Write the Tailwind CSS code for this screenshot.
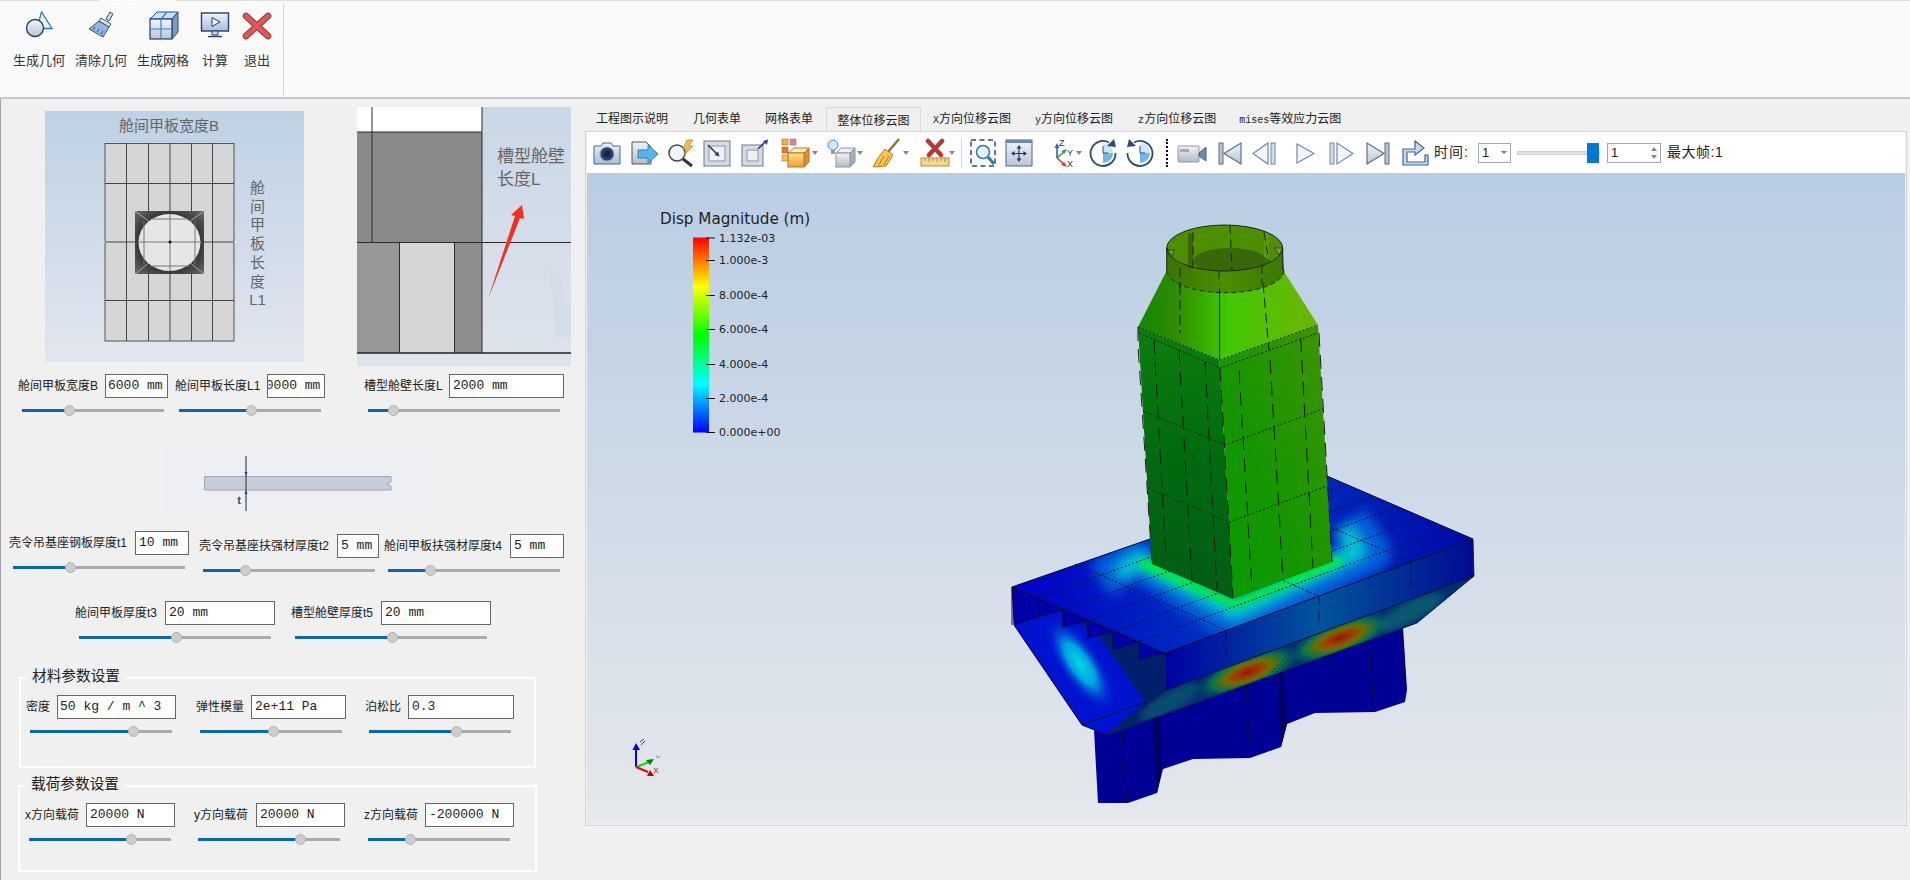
<!DOCTYPE html>
<html><head><meta charset="utf-8"><script src="https://cdn.jsdelivr.net/npm/@tailwindcss/browser@4"></script></head>
<body class="w-[1910px] h-[880px] overflow-hidden bg-[#f0f0f0] text-[12px] text-[#222] font-['Liberation_Sans','Noto_Sans_CJK_SC',sans-serif]">
<svg class="absolute w-0 h-0">
<defs>
<linearGradient id="gb" x1="0" y1="0" x2="0" y2="1"><stop offset="0" stop-color="#eef2f8"/><stop offset="1" stop-color="#a9bfd8"/></linearGradient>
<linearGradient id="gg" x1="0" y1="0" x2="0" y2="1"><stop offset="0" stop-color="#f2f3f5"/><stop offset="1" stop-color="#b4bac4"/></linearGradient>
<linearGradient id="gn" x1="0" y1="0" x2="0" y2="1"><stop offset="0" stop-color="#f4f6fa"/><stop offset="1" stop-color="#b9c4d6"/></linearGradient>
<linearGradient id="go" x1="0" y1="0" x2="0" y2="1"><stop offset="0" stop-color="#ffe08a"/><stop offset="1" stop-color="#f0a030"/></linearGradient>
<linearGradient id="scale" x1="0" y1="1" x2="0" y2="0"><stop offset="0" stop-color="#0000ff"/><stop offset=".25" stop-color="#00ffff"/><stop offset=".5" stop-color="#00ff00"/><stop offset=".75" stop-color="#ffff00"/><stop offset="1" stop-color="#ff0000"/></linearGradient>
<linearGradient id="tl" x1="0" y1="0" x2="0" y2="1"><stop offset="0" stop-color="#0c7e0c"/><stop offset=".5" stop-color="#006a10"/><stop offset="1" stop-color="#045c14"/></linearGradient>
<linearGradient id="tr" x1="1" y1="0" x2="0" y2="1"><stop offset="0" stop-color="#3f9400"/><stop offset=".6" stop-color="#149600"/><stop offset="1" stop-color="#089c00"/></linearGradient>
<linearGradient id="tt" x1="0" y1="0" x2="1" y2="0"><stop offset="0" stop-color="#108a00"/><stop offset=".2" stop-color="#2f8a00"/><stop offset=".5" stop-color="#42c800"/><stop offset="1" stop-color="#6cb400"/></linearGradient>
<linearGradient id="rim" x1="0" y1="0" x2="1" y2="0"><stop offset="0" stop-color="#3c7400"/><stop offset=".5" stop-color="#4b8e00"/><stop offset="1" stop-color="#3c7800"/></linearGradient>
<linearGradient id="ff" x1="0" y1="0" x2="1" y2="0"><stop offset="0" stop-color="#0000a4"/><stop offset=".5" stop-color="#00559c"/><stop offset="1" stop-color="#000a92"/></linearGradient>
<linearGradient id="deck" x1="0" y1="0" x2="1" y2="0"><stop offset="0" stop-color="#0000c4"/><stop offset=".5" stop-color="#0038c0"/><stop offset="1" stop-color="#0008aa"/></linearGradient>
<radialGradient id="hot"><stop offset="0" stop-color="#8a1c00"/><stop offset=".25" stop-color="#a03c00"/><stop offset=".45" stop-color="#6e7000"/><stop offset=".7" stop-color="#0a7050"/><stop offset="1" stop-color="#005070" stop-opacity="0"/></radialGradient>
<radialGradient id="cy"><stop offset="0" stop-color="#00dcdc"/><stop offset=".45" stop-color="#00a0e0"/><stop offset="1" stop-color="#0020d0" stop-opacity="0"/></radialGradient>
<filter id="blur" x="-20%" y="-20%" width="140%" height="140%"><feGaussianBlur stdDeviation="6"/></filter>
<filter id="blur2" x="-20%" y="-20%" width="140%" height="140%"><feGaussianBlur stdDeviation="3"/></filter>
<clipPath id="deckclip"><polygon points="1012,587 1150,539 1327,476 1473,539 1165,653"/></clipPath>
<clipPath id="plateclip"><polygon points="1107,735 1166,690 1474,576 1417,623"/></clipPath>
<clipPath id="panelclip"><polygon points="1014,625 1062,610 1100,637 1145,702 1107,735 1082,725"/></clipPath>
<clipPath id="topclip"><ellipse cx="1224.7" cy="248" rx="58" ry="23"/></clipPath>
</defs>
</svg>

<!-- ribbon -->
<header class="h-[99px] flex flex-col">
  <div class="flex h-[1px]"><div class="w-[100px] bg-[#e0e0e0]"></div><div class="w-[76px] bg-white"></div><div class="flex-1 bg-[#e0e0e0]"></div></div>
  <div class="flex-1 bg-[#fafafa] flex pl-[8px] text-[13px] text-[#333]">
    <div class="w-[62px] flex flex-col items-center pt-[9px]">
      <svg class="w-[30px] h-[30px]" viewBox="0 0 30 30"><path d="M17.500 2 L28 18.500 H13 Z" fill="#eef4fa" stroke="#1c7cc0" stroke-width="1.300"/><circle cx="11" cy="18" r="8.500" fill="url(#gn)" stroke="#2a3f66" stroke-width="1.400"/></svg>
      <span class="mt-[11px] leading-[20px]">生成几何</span>
    </div>
    <div class="w-[62px] flex flex-col items-center pt-[9px]">
      <svg class="w-[30px] h-[30px]" viewBox="0 0 30 30"><path d="M20 9 L24 2 L27 4 L23 11 Z" fill="#cfd9e8" stroke="#34507c"/><path d="M15 8 L25 14 L23 17 L13 11 Z" fill="#dfe6f0" stroke="#34507c"/><path d="M13 11 L23 17 L17 27 L3 19 Z" fill="#8fb6e0" stroke="#34507c"/><path d="M7 20 l2 -3 M11 22 l2 -3 M15 24 l2 -3" stroke="#34507c"/></svg>
      <span class="mt-[11px] leading-[20px]">清除几何</span>
    </div>
    <div class="w-[62px] flex flex-col items-center pt-[9px]">
      <svg class="w-[32px] h-[30px]" viewBox="0 0 32 30"><path d="M3 9 L10 2 H31 L25 9 Z" fill="#cfe0f0" stroke="#1c4f86"/><path d="M25 9 L31 2 V22 L25 29 Z" fill="#7d9cc0" stroke="#1c4f86"/><rect x="3" y="9" width="22" height="20" fill="url(#gn)" stroke="#1c3f70" stroke-width="1.200"/><path d="M14 9 V29 M3 19 H25 M14 9 L20 2" stroke="#2e86c8" stroke-width="1.200" fill="none"/></svg>
      <span class="mt-[11px] leading-[20px]">生成网格</span>
    </div>
    <div class="w-[42px] flex flex-col items-center pt-[9px]">
      <svg class="w-[30px] h-[30px]" viewBox="0 0 30 30"><rect x="1.500" y="3" width="27" height="18" fill="url(#gb)" stroke="#24406c" stroke-width="1.400"/><path d="M12 7.500 L20 12 L12 16.500 Z" fill="#eef4fb" stroke="#24406c"/><path d="M12 21 H18 V25 H12 Z" fill="#c8d2e0" stroke="#24406c"/><path d="M8 26.500 H22" stroke="#24406c" stroke-width="1.400"/></svg>
      <span class="mt-[11px] leading-[20px]">计算</span>
    </div>
    <div class="w-[42px] flex flex-col items-center pt-[9px]">
      <svg class="w-[30px] h-[30px]" viewBox="0 0 30 30"><path d="M4 6 L15 16 M26 6 L15 16 M4 26 L15 16 M26 26 L15 16" stroke="#a03030" stroke-width="6.500" stroke-linecap="round"/><path d="M4 6 L26 26 M26 6 L4 26" stroke="#dc5a5a" stroke-width="4.500" stroke-linecap="round"/></svg>
      <span class="mt-[11px] leading-[20px]">退出</span>
    </div>
    <div class="ml-[5px] w-[1px] my-[2px] bg-[#d4d4d4]"></div>
  </div>
  <div class="h-[2px] bg-[#c8c8c8]"></div>
</header>

<main class="flex h-[781px]">
<!-- left panel -->
<section class="w-[585px] shadow-[inset_1px_0_0_#a0a0a0] pt-[8px]">
  <div class="flex items-start pl-[45px]">
    <svg class="mt-[4px] w-[259px] h-[251px]" viewBox="45 111 259 251">
      <defs><linearGradient id="i1" x1="0" y1="0" x2="0" y2="1"><stop offset="0" stop-color="#bed1e5"/><stop offset="1" stop-color="#e2e6ee"/></linearGradient><radialGradient id="box" cx=".5" cy=".5" r=".7"><stop offset=".5" stop-color="#222"/><stop offset="1" stop-color="#6a6a6a"/></radialGradient></defs>
      <rect x="45" y="111" width="259" height="251" fill="url(#i1)"/>
      <rect x="105" y="143.500" width="129" height="197.500" fill="#d6d6d6" stroke="#555" stroke-width="1"/>
      <path d="M126.500 143.500V341 M148.500 143.500V341 M170 143.500V341 M191.500 143.500V341 M212.500 143.500V341 M105 183.500H234 M105 242H234 M105 300.500H234" stroke="#444" stroke-width="1" fill="none"/>
      <path d="M103 242H105 M234 242H236" stroke="#fff"/>
      <rect x="135" y="211" width="69" height="63" fill="url(#box)"/>
      <path d="M135 211 L150 222 M204 211 L189 222 M135 274 L150 262 M204 274 L189 262" stroke="#aaa"/>
      <ellipse cx="169.500" cy="242.500" rx="31" ry="28.500" fill="#e6e6e6"/>
      <path d="M144 220V265 M195 220V265 M150 219H189 M150 266H189 M170 214V271 M139 242H200" stroke="#777" fill="none"/>
      <circle cx="170" cy="242" r="1.500" fill="#111"/>
      <text x="169" y="131" text-anchor="middle" font-size="15" fill="#666">舱间甲板宽度B</text>
      <text font-size="15" fill="#666" text-anchor="middle"><tspan x="257.500" y="193">舱</tspan><tspan x="257.500" y="212">间</tspan><tspan x="257.500" y="230">甲</tspan><tspan x="257.500" y="249">板</tspan><tspan x="257.500" y="268">长</tspan><tspan x="257.500" y="287">度</tspan><tspan x="257.500" y="305">L1</tspan></text>
    </svg>
    <svg class="ml-[53px] w-[214px] h-[259px]" viewBox="357 107 214 259">
      <defs><linearGradient id="i2" x1="0" y1="0" x2="0" y2="1"><stop offset="0" stop-color="#cad7e6"/><stop offset="1" stop-color="#dee4ec"/></linearGradient></defs>
      <rect x="357" y="107" width="214" height="259" fill="url(#i2)"/>
      <path d="M547 262L560 270L563 300L571 305V337H556L553 300Z" fill="#d5dde8"/>
      <rect x="357" y="107" width="125" height="25" fill="#fff"/>
      <rect x="357" y="132" width="125" height="110" fill="#8a8a8a"/>
      <rect x="357" y="242" width="42" height="111" fill="#989898"/>
      <rect x="399" y="242" width="55" height="111" fill="#d6d6d6"/>
      <rect x="454" y="242" width="28" height="111" fill="#8e8e8e"/>
      <path d="M372 107V242 M482 107V353 M357 132H482 M357 242.500H571 M399.500 243V353 M454.500 243V353" stroke="#2a2a2a" stroke-width="1" fill="none"/>
      <path d="M357 353H571" stroke="#222" stroke-width="1.500"/>
      <text x="497" y="162" font-size="17" fill="#666">槽型舱壁</text>
      <text x="497" y="185" font-size="17" fill="#666">长度L</text>
      <path d="M488 299 L515 216 L511 215 L522 205 L524 219 L520 218 Z" fill="#f03020"/>
    </svg>
  </div>

  <!-- row B L1 L -->
  <div class="flex items-start pl-[18px] mt-[8px]">
    <div>
      <div class="flex items-center h-[24px]"><span class="w-[87px]">舱间甲板宽度B</span><div class="w-[63px] h-[24px] bg-white border border-[#666] pl-[2px] leading-[22px] font-['Liberation_Mono'] text-[13px] whitespace-pre">6000 mm</div></div>
      <div class="relative ml-[4px] mt-[11px] h-[3px] w-[142px] bg-[#aaa]"><div class="h-full w-[47px] bg-[#0a66b8]"></div><div class="absolute left-[42px] -top-[4px] size-[11px] rounded-full bg-[#cdcdcd] border border-[#b4b4b4]"></div></div>
    </div>
    <div class="ml-[7px]">
      <div class="flex items-center h-[24px]"><span class="w-[92px]">舱间甲板长度L1</span><div class="w-[58px] h-[24px] bg-white border border-[#666] overflow-hidden leading-[22px] font-['Liberation_Mono'] text-[13px] whitespace-pre"><span class="inline-block -ml-[10px]">10000 mm</span></div></div>
      <div class="relative ml-[4px] mt-[11px] h-[3px] w-[142px] bg-[#aaa]"><div class="h-full w-[72px] bg-[#0a66b8]"></div><div class="absolute left-[67px] -top-[4px] size-[11px] rounded-full bg-[#cdcdcd] border border-[#b4b4b4]"></div></div>
    </div>
    <div class="ml-[39px]">
      <div class="flex items-center h-[24px]"><span class="w-[85px]">槽型舱壁长度L</span><div class="w-[115px] h-[24px] bg-white border border-[#666] pl-[3px] leading-[22px] font-['Liberation_Mono'] text-[13px] whitespace-pre">2000 mm</div></div>
      <div class="relative ml-[4px] mt-[11px] h-[3px] w-[192px] bg-[#aaa]"><div class="h-full w-[25px] bg-[#0a66b8]"></div><div class="absolute left-[20px] -top-[4px] size-[11px] rounded-full bg-[#cdcdcd] border border-[#b4b4b4]"></div></div>
    </div>
  </div>

  <!-- thickness picture -->
  <svg class="ml-[162px] mt-[31px] w-[278px] h-[76px]" viewBox="162 443 278 76">
    <rect x="162" y="443" width="278" height="76" fill="#eeeff2"/>
    <path d="M204.500 476.500H391V482L387 483.500L391 486V490H204.500Z" fill="#c6cdd9" stroke="#9aa5b5"/>
    <path d="M246 456V511" stroke="#3d4a66" stroke-width="1.200"/>
    <path d="M244.500 472H247.500L246 476Z M244.500 494H247.500L246 490Z" fill="#2d3a56"/>
    <text x="239" y="504" text-anchor="middle" font-size="11" font-weight="700" fill="#3d4a66">t</text>
  </svg>

  <div class="flex items-start pl-[9px] mt-[12px]">
    <div>
      <div class="flex items-center h-[24px]"><span class="w-[126px]">壳令吊基座钢板厚度t1</span><div class="w-[54px] h-[24px] bg-white border border-[#666] pl-[3px] leading-[22px] font-['Liberation_Mono'] text-[13px] whitespace-pre">10 mm</div></div>
      <div class="relative ml-[4px] mt-[11px] h-[3px] w-[172px] bg-[#aaa]"><div class="h-full w-[57px] bg-[#0a66b8]"></div><div class="absolute left-[52px] -top-[4px] size-[11px] rounded-full bg-[#cdcdcd] border border-[#b4b4b4]"></div></div>
    </div>
    <div class="ml-[10px] mt-[3px]">
      <div class="flex items-center h-[24px]"><span class="w-[138px]">壳令吊基座扶强材厚度t2</span><div class="w-[42px] h-[24px] bg-white border border-[#666] pl-[3px] leading-[22px] font-['Liberation_Mono'] text-[13px] whitespace-pre">5 mm</div></div>
      <div class="relative ml-[4px] mt-[11px] h-[3px] w-[172px] bg-[#aaa]"><div class="h-full w-[42px] bg-[#0a66b8]"></div><div class="absolute left-[37px] -top-[4px] size-[11px] rounded-full bg-[#cdcdcd] border border-[#b4b4b4]"></div></div>
    </div>
    <div class="ml-[5px] mt-[3px]">
      <div class="flex items-center h-[24px]"><span class="w-[126px]">舱间甲板扶强材厚度t4</span><div class="w-[54px] h-[24px] bg-white border border-[#666] pl-[3px] leading-[22px] font-['Liberation_Mono'] text-[13px] whitespace-pre">5 mm</div></div>
      <div class="relative ml-[4px] mt-[11px] h-[3px] w-[172px] bg-[#aaa]"><div class="h-full w-[42px] bg-[#0a66b8]"></div><div class="absolute left-[37px] -top-[4px] size-[11px] rounded-full bg-[#cdcdcd] border border-[#b4b4b4]"></div></div>
    </div>
  </div>

  <div class="flex items-start pl-[75px] mt-[29px]">
    <div>
      <div class="flex items-center h-[24px]"><span class="w-[90px]">舱间甲板厚度t3</span><div class="w-[110px] h-[24px] bg-white border border-[#666] pl-[3px] leading-[22px] font-['Liberation_Mono'] text-[13px] whitespace-pre">20 mm</div></div>
      <div class="relative ml-[4px] mt-[11px] h-[3px] w-[192px] bg-[#aaa]"><div class="h-full w-[97px] bg-[#0a66b8]"></div><div class="absolute left-[92px] -top-[4px] size-[11px] rounded-full bg-[#cdcdcd] border border-[#b4b4b4]"></div></div>
    </div>
    <div class="ml-[16px]">
      <div class="flex items-center h-[24px]"><span class="w-[90px]">槽型舱壁厚度t5</span><div class="w-[110px] h-[24px] bg-white border border-[#666] pl-[3px] leading-[22px] font-['Liberation_Mono'] text-[13px] whitespace-pre">20 mm</div></div>
      <div class="relative ml-[4px] mt-[11px] h-[3px] w-[192px] bg-[#aaa]"><div class="h-full w-[97px] bg-[#0a66b8]"></div><div class="absolute left-[92px] -top-[4px] size-[11px] rounded-full bg-[#cdcdcd] border border-[#b4b4b4]"></div></div>
    </div>
  </div>

  <!-- material -->
  <div class="relative ml-[19px] mt-[38px] w-[517px] h-[91px] border-2 border-white pt-[16px] pl-[5px] flex items-start">
    <span class="absolute left-[5px] -top-[13px] px-[6px] bg-[#f0f0f0] text-[14.67px] leading-[20px]">材料参数设置</span>
    <div>
      <div class="flex items-center h-[24px]"><span class="w-[31px]">密度</span><div class="w-[119px] h-[24px] bg-white border border-[#666] pl-[2px] leading-[22px] font-['Liberation_Mono'] text-[13px] whitespace-pre">50 kg / m ^ 3</div></div>
      <div class="relative ml-[4px] mt-[11px] h-[3px] w-[142px] bg-[#aaa]"><div class="h-full w-[103px] bg-[#0a66b8]"></div><div class="absolute left-[98px] -top-[4px] size-[11px] rounded-full bg-[#cdcdcd] border border-[#b4b4b4]"></div></div>
    </div>
    <div class="ml-[20px]">
      <div class="flex items-center h-[24px]"><span class="w-[55px]">弹性模量</span><div class="w-[95px] h-[24px] bg-white border border-[#666] pl-[3px] leading-[22px] font-['Liberation_Mono'] text-[13px] whitespace-pre">2e+11 Pa</div></div>
      <div class="relative ml-[4px] mt-[11px] h-[3px] w-[142px] bg-[#aaa]"><div class="h-full w-[73px] bg-[#0a66b8]"></div><div class="absolute left-[68px] -top-[4px] size-[11px] rounded-full bg-[#cdcdcd] border border-[#b4b4b4]"></div></div>
    </div>
    <div class="ml-[19px]">
      <div class="flex items-center h-[24px]"><span class="w-[43px]">泊松比</span><div class="w-[106px] h-[24px] bg-white border border-[#666] pl-[3px] leading-[22px] font-['Liberation_Mono'] text-[13px] whitespace-pre">0.3</div></div>
      <div class="relative ml-[4px] mt-[11px] h-[3px] w-[142px] bg-[#aaa]"><div class="h-full w-[87px] bg-[#0a66b8]"></div><div class="absolute left-[82px] -top-[4px] size-[11px] rounded-full bg-[#cdcdcd] border border-[#b4b4b4]"></div></div>
    </div>
  </div>

  <!-- load -->
  <div class="relative ml-[18px] mt-[17px] w-[519px] h-[87px] border-2 border-white pt-[16px] pl-[5px] flex items-start">
    <span class="absolute left-[5px] -top-[13px] px-[6px] bg-[#f0f0f0] text-[14.67px] leading-[20px]">载荷参数设置</span>
    <div>
      <div class="flex items-center h-[24px]"><span class="w-[61px]">x方向载荷</span><div class="w-[89px] h-[24px] bg-white border border-[#666] pl-[3px] leading-[22px] font-['Liberation_Mono'] text-[13px] whitespace-pre">20000 N</div></div>
      <div class="relative ml-[4px] mt-[11px] h-[3px] w-[142px] bg-[#aaa]"><div class="h-full w-[102px] bg-[#0a66b8]"></div><div class="absolute left-[97px] -top-[4px] size-[11px] rounded-full bg-[#cdcdcd] border border-[#b4b4b4]"></div></div>
    </div>
    <div class="ml-[19px]">
      <div class="flex items-center h-[24px]"><span class="w-[62px]">y方向载荷</span><div class="w-[89px] h-[24px] bg-white border border-[#666] pl-[3px] leading-[22px] font-['Liberation_Mono'] text-[13px] whitespace-pre">20000 N</div></div>
      <div class="relative ml-[4px] mt-[11px] h-[3px] w-[142px] bg-[#aaa]"><div class="h-full w-[102px] bg-[#0a66b8]"></div><div class="absolute left-[97px] -top-[4px] size-[11px] rounded-full bg-[#cdcdcd] border border-[#b4b4b4]"></div></div>
    </div>
    <div class="ml-[19px]">
      <div class="flex items-center h-[24px]"><span class="w-[61px]">z方向载荷</span><div class="w-[89px] h-[24px] bg-white border border-[#666] pl-[3px] leading-[22px] font-['Liberation_Mono'] text-[13px] whitespace-pre">-200000 N</div></div>
      <div class="relative ml-[4px] mt-[11px] h-[3px] w-[142px] bg-[#aaa]"><div class="h-full w-[42px] bg-[#0a66b8]"></div><div class="absolute left-[37px] -top-[4px] size-[11px] rounded-full bg-[#cdcdcd] border border-[#b4b4b4]"></div></div>
    </div>
  </div>
</section>

<!-- right panel -->
<section class="w-[1322px] pt-[8px] flex flex-col items-stretch">
  <nav class="flex h-[24px] items-center pl-[11px]">
    <span>工程图示说明</span>
    <span class="ml-[25px]">几何表单</span>
    <span class="ml-[24px]">网格表单</span>
    <span class="ml-[13px] w-[95px] h-[24px] leading-[26px] text-center bg-[#f0f0f0] border border-b-0 border-[#d9d9d9]">整体位移云图</span>
    <span class="ml-[12px]"><span class="font-['Liberation_Mono'] text-[10px]">X</span>方向位移云图</span>
    <span class="ml-[24px]"><span class="font-['Liberation_Mono'] text-[10px]">y</span>方向位移云图</span>
    <span class="ml-[25px]"><span class="font-['Liberation_Mono'] text-[10px]">z</span>方向位移云图</span>
    <span class="ml-[23px]"><span class="font-['Liberation_Mono'] text-[10px]">mises</span>等效应力云图</span>
  </nav>
  <div class="h-[695px] border border-[#d4d4d4] px-[1px] pb-[2px]">
  <div class="h-[41px] bg-white flex items-center pl-[5px] text-[14px]">
    <svg class="w-[30px] h-[30px]" viewBox="0 0 30 30"><path d="M2 8H9L11 5H19L21 8H28V26H2Z" fill="url(#gb)" stroke="#47658c"/><circle cx="15" cy="16" r="7" fill="#2a3f6a" stroke="#8ea8c8"/><circle cx="15" cy="16" r="3.500" fill="#15264a"/></svg>
    <svg class="ml-[7px] w-[30px] h-[30px]" viewBox="0 0 30 30"><path d="M3 4H17L22 9V26H3Z" fill="url(#gg)" stroke="#555"/><path d="M9 12H19V7L29 16L19 25V20H9Z" fill="#59b4ec" stroke="#2a84c0"/></svg>
    <svg class="ml-[6px] w-[30px] h-[30px]" viewBox="0 0 30 30"><circle cx="12" cy="15" r="8" fill="#eef3f8" stroke="#444" stroke-width="1.500"/><path d="M18 21L27 28" stroke="#333" stroke-width="3"/><path d="M22 2L18 11H22L19 17L28 8H24L28 2Z" fill="#f5b85a" stroke="#c87a20" stroke-width=".7"/></svg>
    <svg class="ml-[7px] w-[30px] h-[30px]" viewBox="0 0 30 30"><rect x="2" y="3" width="26" height="25" fill="#d5dbe3" stroke="#6a7a8e"/><rect x="7" y="8" width="16" height="15" fill="#eef0f3" stroke="#8a96a6"/><path d="M6 7L16 17" stroke="#1e3f70" stroke-width="1.600"/><path d="M17.500 18.500L12.500 17L16 13.500Z" fill="#1e3f70"/></svg>
    <svg class="ml-[8px] w-[30px] h-[30px]" viewBox="0 0 30 30"><rect x="2" y="7" width="21" height="21" fill="#d5dbe3" stroke="#6a7a8e"/><rect x="7" y="12" width="11" height="11" fill="#eef0f3" stroke="#8a96a6"/><path d="M18 11L26 3" stroke="#2a4a78" stroke-width="1.600"/><path d="M28 1.500L27 7L23 3Z" fill="#2a4a78"/></svg>
    <svg class="ml-[10px] w-[30px] h-[30px]" viewBox="0 0 30 30"><rect x="2" y="1" width="6" height="6" fill="#f4b040" stroke="#a07020" stroke-width=".6"/><rect x="10" y="1" width="6" height="6" fill="#e88080" stroke="#7080a0" stroke-width=".6"/><rect x="2" y="9" width="6" height="6" fill="#e87040" stroke="#a07020" stroke-width=".6"/><rect x="2" y="17" width="6" height="6" fill="#f4c060" stroke="#a07020" stroke-width=".6"/><path d="M8 15L14 10H29L24 15Z" fill="#fdeeba" stroke="#b07820"/><path d="M24 15L29 10V24L24 29Z" fill="#e09030" stroke="#b07820"/><rect x="8" y="15" width="16" height="14" fill="url(#go)" stroke="#b07820"/></svg>
    <svg class="ml-[2px] w-[6px] h-[4px]" viewBox="0 0 6 4"><path d="M0 0H6L3 4Z" fill="#888"/></svg>
    <svg class="ml-[8px] w-[30px] h-[30px]" viewBox="0 0 30 30"><circle cx="7" cy="7" r="5" fill="#cfe8fb" stroke="#5a90c0"/><rect x="5" y="12" width="4" height="4" fill="#999"/><path d="M10 15L15 10H29L24 15Z" fill="#eef0f3" stroke="#8a96a6"/><path d="M24 15L29 10V24L24 29Z" fill="#a6afbc" stroke="#8a96a6"/><rect x="10" y="15" width="14" height="14" fill="url(#gg)" stroke="#8a96a6"/></svg>
    <svg class="ml-[1px] w-[6px] h-[4px]" viewBox="0 0 6 4"><path d="M0 0H6L3 4Z" fill="#888"/></svg>
    <svg class="ml-[9px] w-[30px] h-[30px]" viewBox="0 0 30 30"><path d="M27 1L16 14" stroke="#a06a30" stroke-width="2.400"/><path d="M13 11L21 17L14 28L1 29L6 20Z" fill="#f6c452" stroke="#b87a20"/><path d="M7 27L12 18 M12 27L17 18" stroke="#b87a20"/></svg>
    <svg class="ml-[1px] w-[6px] h-[4px]" viewBox="0 0 6 4"><path d="M0 0H6L3 4Z" fill="#888"/></svg>
    <svg class="ml-[11px] w-[30px] h-[30px]" viewBox="0 0 30 30"><path d="M8 3L21 17 M22 3L9 17" stroke="#b83838" stroke-width="4.500" stroke-linecap="round"/><rect x="1" y="20" width="28" height="8" fill="#f5d890" stroke="#b88a30"/><path d="M5 20v3 M9 20v4 M13 20v3 M17 20v4 M21 20v3 M25 20v4" stroke="#b88a30"/></svg>
    <svg class="-ml-[1px] w-[6px] h-[4px]" viewBox="0 0 6 4"><path d="M0 0H6L3 4Z" fill="#888"/></svg>
    <div class="ml-[6px] w-[1px] h-[30px] bg-[#d8d8d8]"></div>
    <svg class="ml-[6px] w-[30px] h-[30px]" viewBox="0 0 30 30"><rect x="3" y="2" width="24" height="26" fill="none" stroke="#2a4a78" stroke-width="1.500" stroke-dasharray="5 3.500"/><circle cx="15" cy="14" r="6.500" fill="#e6f2fb" stroke="#2a78b8" stroke-width="1.500"/><path d="M20 19L26 26" stroke="#2a78b8" stroke-width="3"/></svg>
    <svg class="ml-[6px] w-[30px] h-[30px]" viewBox="0 0 30 30"><rect x="2" y="2" width="26" height="26" fill="url(#gn)" stroke="#47658c"/><rect x="2" y="2" width="26" height="3" fill="#6e88ac"/><path d="M15 9V22 M9 15.500H21" stroke="#1e3f70" stroke-width="1.200"/><path d="M15 7L12.500 10.500H17.500Z M15 24L12.500 20.500H17.500Z M7 15.500L10.500 13V18Z M23 15.500L19.500 13V18Z" fill="#1e3f70"/></svg>
    <svg class="ml-[14px] w-[30px] h-[30px]" viewBox="0 0 30 30"><path d="M9 20V8" stroke="#2a60c0" stroke-width="1.600"/><path d="M9 20L17 13" stroke="#20a040" stroke-width="1.600"/><path d="M9 20L17 27" stroke="#e03030" stroke-width="1.600"/><path d="M9 5L6.500 10H11.500Z" fill="#2a60c0"/><path d="M19 11L13.500 13L16 16Z" fill="#20a040"/><path d="M19 29L16 24L13.500 27Z" fill="#e03030"/><text x="11" y="8" font-size="9" fill="#333">Z</text><text x="19" y="18" font-size="9" fill="#333">Y</text><text x="19" y="29" font-size="9" fill="#333">X</text></svg>
    <svg class="-ml-[2px] w-[6px] h-[4px]" viewBox="0 0 6 4"><path d="M0 0H6L3 4Z" fill="#888"/></svg>
    <svg class="ml-[6px] w-[30px] h-[30px]" viewBox="0 0 30 30"><path d="M15 15V5A10 10 0 0 1 25 15Z" fill="#cfe4f6"/><path d="M15 15H25A10 10 0 0 1 15 25Z" fill="#6cb8ec"/><path d="M15 15V8M15 15H20" stroke="#2a4a78"/><path d="M21 4.500A12.500 12.500 0 1 0 27.500 15" fill="none" stroke="#2a4a78" stroke-width="1.800"/><path d="M28 9L19 8L26 1Z" fill="#2a4a78"/></svg>
    <svg class="ml-[7px] w-[30px] h-[30px]" viewBox="0 0 30 30"><path d="M15 15V5A10 10 0 0 1 25 15Z" fill="#cfe4f6"/><path d="M15 15H25A10 10 0 0 1 15 25Z" fill="#6cb8ec"/><path d="M15 15V8M15 15H20" stroke="#2a4a78"/><path d="M9 4.500A12.500 12.500 0 1 1 2.500 15" fill="none" stroke="#2a4a78" stroke-width="1.800"/><path d="M2 9L11 8L4 1Z" fill="#2a4a78"/></svg>
    <div class="ml-[11px] h-[28px] w-0 border-l-2 border-dotted border-black"></div>
    <svg class="ml-[9px] w-[30px] h-[30px]" viewBox="0 0 30 30"><rect x="1" y="8" width="21" height="16" rx="1" fill="url(#gg)" stroke="#8a96a6"/><rect x="3" y="11" width="9" height="3" fill="#a0a8b4"/><path d="M22 15L29 9V23L22 18Z" fill="#6a8ab0" stroke="#47658c"/></svg>
    <svg class="ml-[8px] w-[30px] h-[30px]" viewBox="0 0 30 30"><rect x="4" y="5" width="4" height="21" fill="#b8c4d6" stroke="#5a6f90"/><path d="M26 5V26L9 15.500Z" fill="url(#gn)" stroke="#5a6f90" stroke-width="1.200"/></svg>
    <svg class="ml-[6px] w-[30px] h-[30px]" viewBox="0 0 30 30"><rect x="20" y="5" width="4" height="21" fill="#d4dce6" stroke="#7088a8"/><path d="M17 5V26L2 15.500Z" fill="#f2f5f9" stroke="#7088a8" stroke-width="1.200"/></svg>
    <svg class="ml-[9px] w-[30px] h-[30px]" viewBox="0 0 30 30"><path d="M7 6V25L24 15.500Z" fill="#f2f5f9" stroke="#7088a8" stroke-width="1.200"/></svg>
    <svg class="ml-[6px] w-[30px] h-[30px]" viewBox="0 0 30 30"><rect x="4" y="5" width="4" height="21" fill="#d4dce6" stroke="#7088a8"/><path d="M11 5V26L27 15.500Z" fill="#f2f5f9" stroke="#7088a8" stroke-width="1.200"/></svg>
    <svg class="ml-[7px] w-[30px] h-[30px]" viewBox="0 0 30 30"><rect x="22" y="5" width="4" height="21" fill="#b8c4d6" stroke="#5a6f90"/><path d="M4 5V26L21 15.500Z" fill="url(#gn)" stroke="#5a6f90" stroke-width="1.200"/></svg>
    <svg class="ml-[7px] w-[30px] h-[30px]" viewBox="0 0 30 30"><path d="M3 11H15V7V3L24 10L15 17V14H7V24H25V17H28V27H3Z" fill="#c8d8ec" stroke="#47658c" stroke-width="1.200"/></svg>
    <span class="ml-[4px] w-[44px] tracking-[1px] whitespace-pre">时间:</span>
    <div class="w-[33px] h-[20px] border border-[#a8a8a8] flex items-center justify-between px-[3px] text-[13px]"><span>1</span><svg class="w-[6px] h-[3px]" viewBox="0 0 6 3"><path d="M0 0H6L3 3Z" fill="#777"/></svg></div>
    <div class="relative ml-[6px] w-[83px] h-[4px] bg-[#e0e2e2] border border-[#d0d0d0]"><div class="absolute right-0 -top-[9px] w-[12px] h-[20px] bg-[#0078d7]"></div></div>
    <div class="ml-[7px] w-[54px] h-[20px] border border-[#a8a8a8] flex items-center justify-between pl-[3px] pr-[3px] text-[13px]"><span>1</span><svg class="w-[6px] h-[12px]" viewBox="0 0 6 12"><path d="M0 4H6L3 0Z M0 8H6L3 12Z" fill="#888"/></svg></div>
    <span class="ml-[6px] tracking-[.5px]">最大帧:1</span>
  </div>

  <!-- viewport: a free canvas -->
  <div class="h-[650px] bg-[linear-gradient(#b9cde3,#e5e8ec)]">
    <svg class="w-[1318px] h-[650px] block" viewBox="587 173 1318 650">
      <text x="660" y="224" font-size="15.200" fill="#1e1e1e" font-family="DejaVu Sans">Disp Magnitude (m)</text>
      <rect x="693" y="237.500" width="16" height="195" fill="url(#scale)"/>
      <path d="M706 238H715 M706 260.500H715 M706 295.500H715 M706 329.500H715 M706 364.500H715 M706 398.500H715 M706 432.500H715" stroke="#111"/>
      <g font-size="11" fill="#1e1e1e" font-family="DejaVu Sans">
        <text x="719" y="241.500">1.132e-03</text><text x="719" y="264">1.000e-3</text><text x="719" y="299">8.000e-4</text><text x="719" y="333">6.000e-4</text><text x="719" y="368">4.000e-4</text><text x="719" y="402">2.000e-4</text><text x="719" y="436">0.000e+00</text>
      </g>
      <!-- axes -->
      <path d="M636 767V748" stroke="#0000ff" stroke-width="2"/><path d="M636 743L632.500 750H640Z" fill="#0000e0"/>
      <path d="M640 742L644 739 M641 745L645 741" stroke="#2030ff"/>
      <path d="M636 767L652 761" stroke="#00e000" stroke-width="2"/><path d="M654 759L650 765L646 760Z" fill="#008000"/>
      <path d="M656 755L658 758L660 756" stroke="#20e020" fill="none"/>
      <path d="M636 767L648 772" stroke="#f00000" stroke-width="2"/><path d="M654 776H647L650 770Z" fill="#c00000"/>
      <path d="M654 768L658 773M658 768L654 773" stroke="#f02020"/>

      <!-- lower body -->
      <polygon points="1094,730 1098,803 1128,803 1157,793 1163,769 1193,759 1250,758 1281,747 1287,724 1315,713 1375,712 1405,702 1407,690 1403,627 1417,623 1107,735" fill="#000096"/>
      <polygon points="1153,717 1160,714 1162,769 1157,793" fill="#00005e"/>
      <polygon points="1278,673 1283,672 1287,724 1281,747" fill="#00005e"/>
      <path d="M1122,730 L1127,803 M1246,685 L1250,758 M1369,640 L1374,712 M1402,628 L1406,690" stroke="#10102a" stroke-width="1"/>
      <!-- under-deck backing, sloped panel -->
      <polygon points="1012,587 1014,625 1082,725 1107,735 1166,690 1165,653" fill="#00206c"/>
      <polygon points="1014,625 1062,610 1100,637 1145,702 1107,735 1082,725" fill="#0014d0"/>
      <g clip-path="url(#panelclip)"><ellipse cx="1080" cy="664" rx="20" ry="54" transform="rotate(-34 1080 664)" fill="url(#cy)"/></g>
      <path d="M1014,625 L1082,725 L1107,735 M1082,725 L1145,702" stroke="#0a1030" fill="none"/>
      <!-- webs -->
      <polygon points="1012,587 1014,625 1038,617 1063,610 1063,627 1087,621 1088,638 1113,632 1113,650 1139,642 1140,660 1165,653" fill="#0000a6" stroke="#0a1030" stroke-width=".8"/>
      <path d="M1038,598 V617 M1063,610 V627 M1088,621 V638 M1113,632 V650 M1139,642 V660" stroke="#0a1030"/>
      <!-- front face -->
      <polygon points="1165,653 1473,539 1474,576 1166,690" fill="url(#ff)" stroke="#0a1030" stroke-width=".8"/>
      <path d="M1226,630V656 M1319,596V627 M1411,562V588" stroke="#101030" stroke-dasharray="10 5"/>
      <!-- plate -->
      <polygon points="1107,735 1166,690 1474,576 1417,623" fill="#003070"/>
      <g clip-path="url(#plateclip)">
        <polygon points="1107,735 1166,690 1230,667 1180,708" fill="#00256e"/>
        <ellipse cx="1248" cy="672" rx="56" ry="18" transform="rotate(-21 1248 672)" fill="url(#hot)"/>
        <ellipse cx="1340" cy="638" rx="56" ry="18" transform="rotate(-21 1340 638)" fill="url(#hot)"/>
        <ellipse cx="1170" cy="702" rx="34" ry="10" transform="rotate(-30 1170 702)" fill="#0a6a70" opacity=".6" filter="url(#blur2)"/>
        <ellipse cx="1410" cy="612" rx="36" ry="10" transform="rotate(-28 1410 612)" fill="#0a6a70" opacity=".7" filter="url(#blur2)"/>
      </g>
      <path d="M1107,735 L1166,690 L1474,576 L1417,623 Z" fill="none" stroke="#0a1030" stroke-width=".8"/>
      <path d="M1272,672L1300,642M1276,672L1306,642" stroke="#10302a" stroke-dasharray="2 2"/>
      <!-- deck -->
      <polygon points="1012,587 1150,539 1327,476 1473,539 1165,653" fill="url(#deck)"/>
      <g clip-path="url(#deckclip)">
        <path d="M1100,580 L1135,558 L1235,622 L1372,552 L1350,520" fill="none" stroke="#0060d8" stroke-width="38" filter="url(#blur)" stroke-linejoin="round"/>
        <path d="M1118,574 L1138,560 L1235,612 L1358,552 L1345,528" fill="none" stroke="#00c4d0" stroke-width="18" filter="url(#blur)" stroke-linejoin="round"/>
        <path d="M1140,562 L1235,604 L1342,560" fill="none" stroke="#00e848" stroke-width="10" filter="url(#blur2)"/>
      </g>
      <g stroke="#0a1030" stroke-width="1" stroke-dasharray="2 2" fill="none">
        <path d="M1038.300,598.300 L1346,485 M1063.300,610 L1372,496.300 M1088.300,620.700 L1397,507 M1113.300,631.700 L1422.600,517.800 M1139,641.700 L1447,528.300"/>
        <path d="M1075,564 L1225.700,630 M1169.700,532 L1318.300,595.700 M1264.300,499 L1410.700,561.700"/>
      </g>
      <path d="M1012,587 L1150,539 M1327,476 L1473,539 L1165,653 L1012,587" fill="none" stroke="#0a1030" stroke-width="1"/>
      <path d="M1012 587V625" stroke="#0a1030"/>

      <!-- tower -->
      <polygon points="1138,327 1219.500,360 1233,599 1152,564" fill="url(#tl)"/>
      <polygon points="1318,325 1219.500,360 1233,599 1332,562" fill="url(#tr)"/>
      <path d="M1167,270 A58 22 0 0 0 1283,270 L1318,325 L1219.500,360 L1138,327 Z" fill="url(#tt)"/>
      <path d="M1166.700,248 A58 23 0 0 0 1282.700,248 L1284,270 A58 22 0 0 1 1167,271 Z" fill="url(#rim)"/>
      <ellipse cx="1224.700" cy="248" rx="58" ry="23" fill="#4e8f00"/>
      <g clip-path="url(#topclip)"><ellipse cx="1230" cy="261" rx="37" ry="13" fill="#386808"/></g>
      <path d="M1167,248 L1168,250 L1174,250 L1172,257 Z M1283,248 L1274,248 L1279,255Z" fill="#6ca818" stroke="#222" stroke-width=".7"/>
      <rect x="1188" y="233" width="5" height="36" fill="#386808"/>
      <rect x="1264" y="233" width="5" height="24" fill="#5a9a10"/>
      <ellipse cx="1224.700" cy="248" rx="58" ry="23" fill="none" stroke="#1e2418" stroke-width="1"/>
      <path d="M1166.700,248 V271 M1282.700,248 V270" stroke="#1e2418"/>
      <path d="M1167,271 A58 22 0 0 0 1284,270" fill="none" stroke="#1e2418" stroke-dasharray="5 3"/>
      <path d="M1230,225 L1232,270 M1193,232 L1193,268 M1264,232 L1269,262 M1180,268V288 M1219,270V285 M1262,265V284" stroke="#1e2418" stroke-dasharray="9 5" fill="none"/>
      <g stroke="#1c1c1c" fill="none" stroke-width="1">
        <path d="M1219.500,289 V360"/>
        <path d="M1180,285V333 M1263,283L1269,350" stroke-dasharray="10 5"/>
        <path d="M1138,327 V345 L1152,564 M1220,368 L1233,597 M1319,333 L1332,562 M1154,340 L1166,560 M1179,350 L1192,580 M1205,362 L1217,590 M1239,370 L1252,590 M1270,360 L1283,580 M1300.700,338 L1313,568" stroke-dasharray="14 8"/>
        <path d="M1138,327 L1219.500,360 L1318,325 M1139,333 L1220,368 L1318,333 M1143,411 L1225,445 L1323,409 M1148,488 L1229,522 L1327,486" stroke-dasharray="2 2"/>
      </g>
    </svg>
  </div>
  </div>
</section>
</main>
</body></html>
